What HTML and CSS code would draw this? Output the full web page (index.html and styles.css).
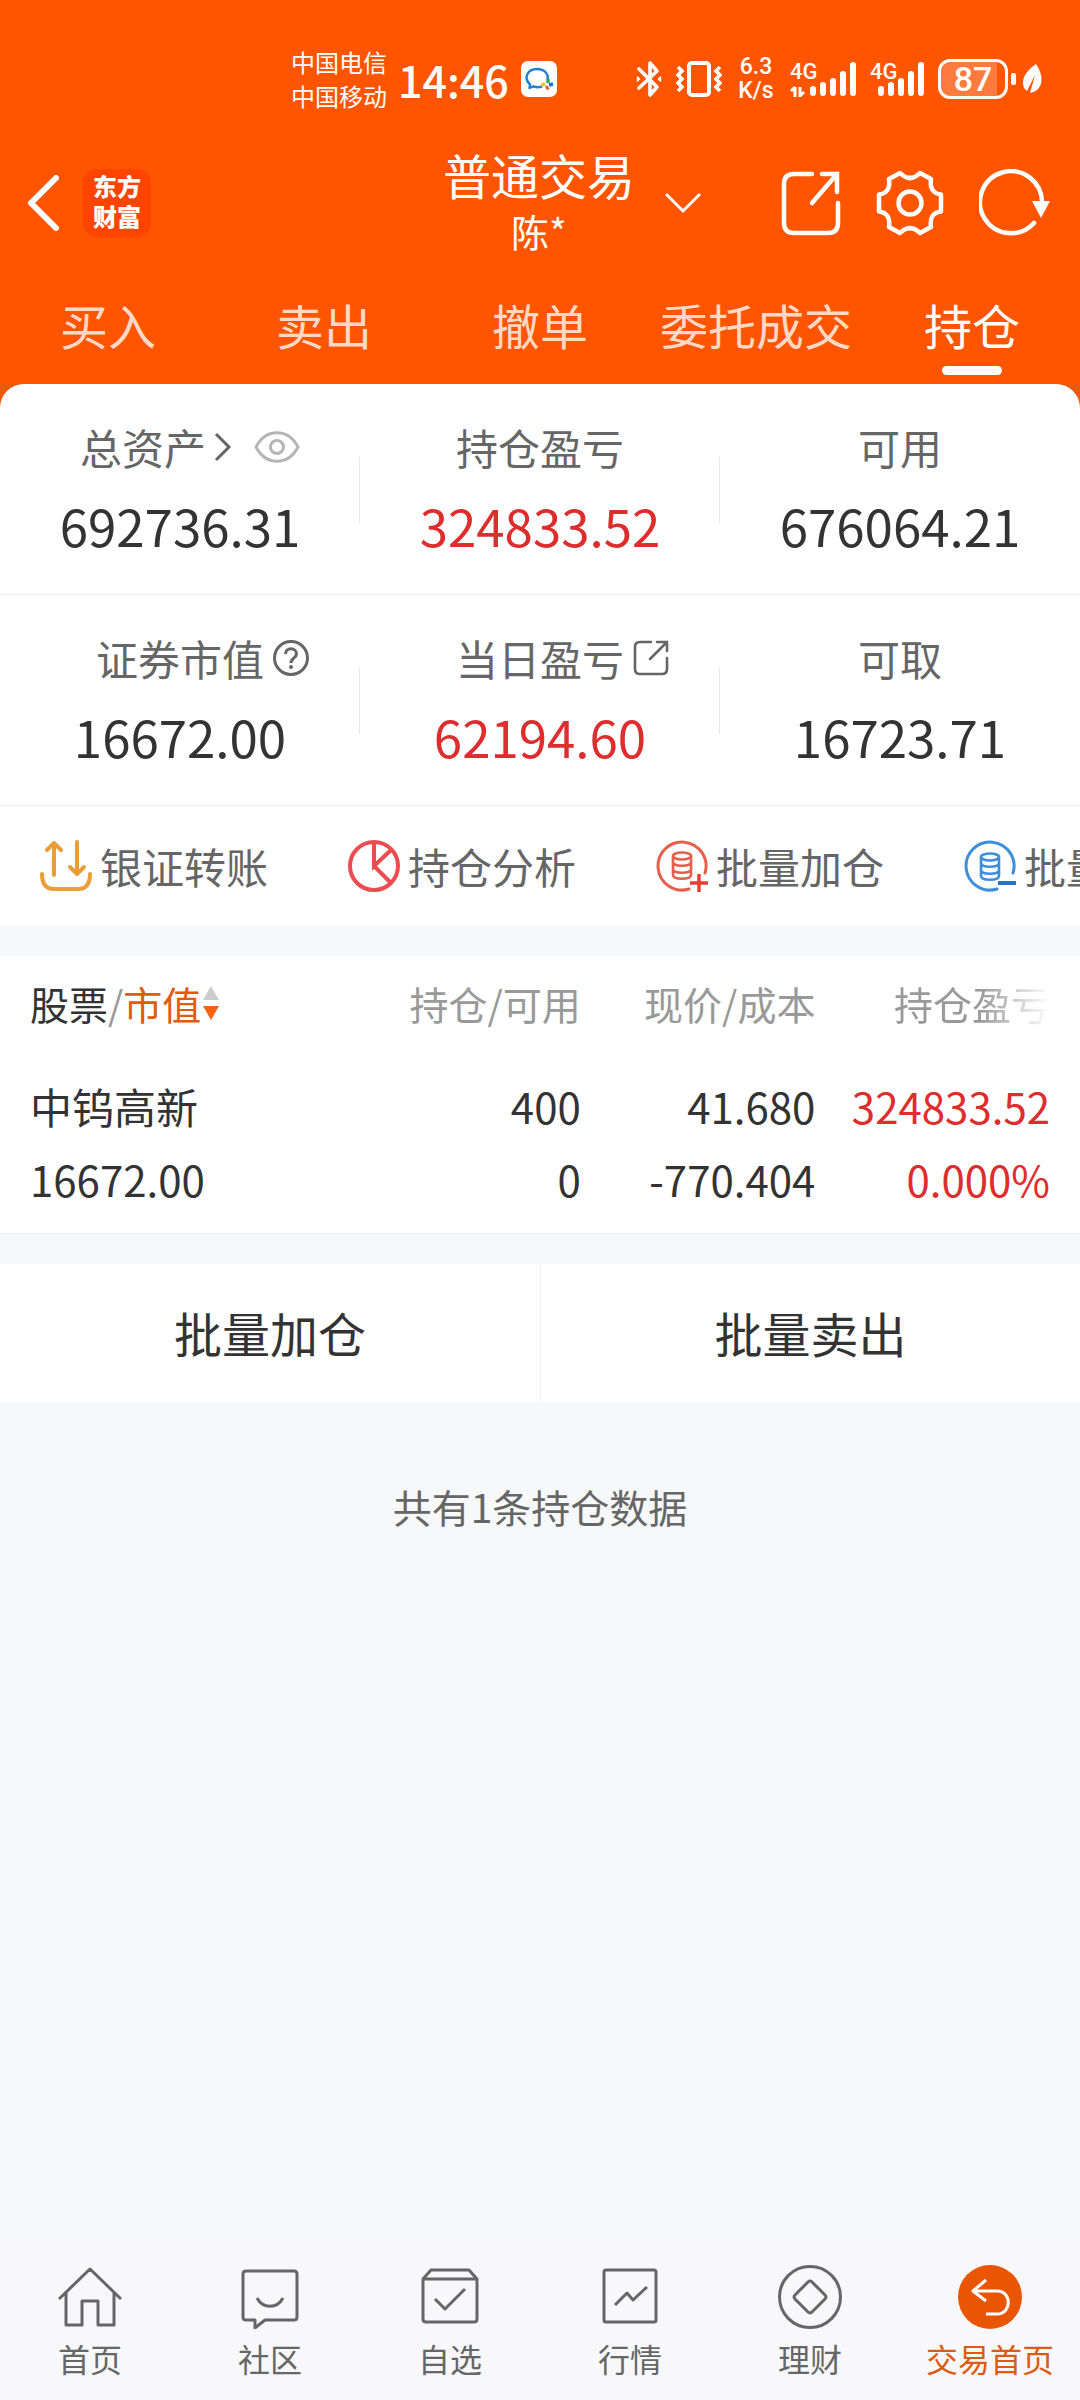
FILE: index.html
```html
<!DOCTYPE html>
<html lang="zh-CN">
<head>
  <meta charset="UTF-8">
  <meta name="viewport" content="width=device-width, initial-scale=1.0">
  <title>普通交易 - 持仓</title>
  <link rel="stylesheet" href="styles.css">
</head>
<body>
  <header class="header">
    <div class="status-bar">
      <div class="carriers">
        <span>中国电信</span>
        <span>中国移动</span>
      </div>
      <span class="time">14:46</span>
      <svg class="app-badge" width="36" height="36" viewBox="0 0 36 36">
        <rect width="36" height="36" rx="7" fill="#fff"/>
        <path d="M21 25.500c-3 1-6 .8-8.500-.2L8.500 27l.6-3.500C2 17 6.500 8 16 8c7.500 0 12 5 10.500 11" fill="none" stroke="#1f7fd6" stroke-width="2.400" stroke-linejoin="round"/>
        <path d="M27 18v4" stroke="#3aa757" stroke-width="3.400"/>
        <path d="M28 24l4-1" stroke="#1f6fd0" stroke-width="3.400"/>
        <path d="M25 25l2.500 3.500" stroke="#e8622c" stroke-width="3"/>
        <path d="M20.500 24.500l3.500-2" stroke="#f5bd1f" stroke-width="3.400"/>
      </svg>
      <div class="status-icons">
        <svg width="26" height="38" viewBox="0 0 26 38" fill="none" stroke="#fff" stroke-width="3.600" stroke-linejoin="round" stroke-linecap="round">
          <path d="M3 9l18 18-7 8V3l7 8L3 28"/>
          <path d="M1.500 17l2 2-2 2zM24.500 17l-2 2 2 2z" stroke-width="1.500" fill="#fff"/>
        </svg>
        <svg width="46" height="38" viewBox="0 0 46 38" fill="none" stroke="#fff" stroke-width="3.600">
          <rect x="13" y="3" width="20" height="32" rx="3" stroke-width="4"/>
          <path d="M2 7l4 4-4 4 4 4-4 4 4 4-4 4M44 7l-4 4 4 4-4 4 4 4-4 4 4 4"/>
        </svg>
        <div class="speed"><span>6.3</span><span>K/s</span></div>
        <svg class="signal" width="66" height="44" viewBox="0 -3 66 44">
          <text x="0" y="19">4G</text>
          <path class="arrows" d="M5 27v10M1 31l4-4M10 27v10M14 32l-4 4"/>
          <path d="M23 29v4M33 25v8M43 21v12M53 14v19M63 5v28"/>
        </svg>
        <svg class="signal" width="54" height="44" viewBox="0 -3 54 44">
          <text x="0" y="19">4G</text>
          <path d="M11 29v4M21 25v8M31 21v12M41 14v19M51 5v28"/>
        </svg>
        <div class="battery"><span>87</span></div>
        <svg class="leaf" width="22" height="32" viewBox="0 0 22 32">
          <path d="M14 1C3 9-1 16 2 25l3 3L13 12 8 30c13-2 15-16 6-29z" fill="#fff"/>
        </svg>
      </div>
    </div>

    <div class="title-bar">
      <div class="title-left">
        <button class="icon-btn" aria-label="返回">
          <svg width="32" height="56" viewBox="0 0 32 56"><path d="M29 3L4 28l25 25" fill="none" stroke="#fff" stroke-width="6" stroke-linecap="round" stroke-linejoin="round"/></svg>
        </button>
        <div class="logo"><span>东方</span><span>财富</span></div>
      </div>
      <div class="title">
        <h1>普通交易</h1>
        <span class="user">陈*</span>
      </div>
      <div class="title-right">
        <button class="icon-btn switch" aria-label="切换账户">
          <svg width="36" height="22" viewBox="0 0 36 22"><path d="M1 2l17 17L35 2" fill="none" stroke="#fff" stroke-width="3"/></svg>
        </button>
        <button class="icon-btn" aria-label="分享">
          <svg width="60" height="68" viewBox="0 0 60 68" fill="none" stroke="#fff" stroke-width="4.500" stroke-linecap="round">
            <path d="M31 5H13Q3 5 3 15v39q0 10 10 10h34q10 0 10-10V34"/>
            <path d="M41 5h15v18M56 5L31 34"/>
          </svg>
        </button>
        <button class="icon-btn" aria-label="设置">
          <svg width="68" height="68" viewBox="0 0 68 68" fill="none" stroke="#fff" stroke-width="4.500" stroke-linejoin="round">
            <path d="M24 4Q34 14 44 4l11 6q-2 14 10 15.500v17Q53 44 55 58l-11 6q-10-10-20 0l-11-6Q15 44 3 42.500v-17Q15 24 13 10z"/>
            <circle cx="34" cy="34" r="11.500"/>
          </svg>
        </button>
        <button class="icon-btn" aria-label="刷新">
          <svg width="72" height="68" viewBox="0 0 72 68">
            <path d="M55 54A31 31 0 1 1 63 34" fill="none" stroke="#fff" stroke-width="4.500" stroke-linecap="round"/>
            <path d="M53 32h18L62 49z" fill="#fff"/>
          </svg>
        </button>
      </div>
    </div>

    <nav class="tabs">
      <a href="#">买入</a>
      <a href="#">卖出</a>
      <a href="#">撤单</a>
      <a href="#">委托成交</a>
      <a href="#" class="active">持仓</a>
    </nav>
  </header>

  <main>
    <div class="card-wrap">
      <section class="card">
        <div class="summary">
          <div class="stat">
            <div class="label label-total">
              <span>总资产</span>
              <svg width="18" height="30" viewBox="0 0 18 30"><path d="M2 2l13 13L2 28" fill="none" stroke="#666" stroke-width="3"/></svg>
              <button class="icon-btn eye" aria-label="隐藏金额">
                <svg width="46" height="32" viewBox="0 0 46 32" fill="none" stroke="#b5b5b5" stroke-width="3">
                  <path d="M2 16C12-3 34-3 44 16 34 35 12 35 2 16z"/>
                  <circle cx="23" cy="16" r="6.500"/>
                </svg>
              </button>
            </div>
            <div class="value">692736.31</div>
          </div>
          <div class="stat">
            <div class="label">持仓盈亏</div>
            <div class="value up">324833.52</div>
          </div>
          <div class="stat">
            <div class="label">可用</div>
            <div class="value">676064.21</div>
          </div>
        </div>
        <div class="summary">
          <div class="stat">
            <div class="label"><span class="with-icon">证券市值
              <svg width="38" height="38" viewBox="0 0 38 38" fill="none" stroke="#666" stroke-width="3">
                <circle cx="19" cy="19" r="16.500"/>
                <path d="M13.500 15c0-7 11-7 11 0 0 4-5.500 4-5.500 9"/>
                <circle cx="19" cy="28" r="2" fill="#666" stroke="none"/>
              </svg></span>
            </div>
            <div class="value">16672.00</div>
          </div>
          <div class="stat">
            <div class="label"><span class="with-icon">当日盈亏
              <svg width="38" height="38" viewBox="0 0 38 38" fill="none" stroke="#666" stroke-width="2.600" stroke-linecap="round">
                <path d="M19 3H8Q3 3 3 8v22q0 5 5 5h22q5 0 5-5V19"/>
                <path d="M25 3h10v9M35 3L18 20"/>
              </svg></span>
            </div>
            <div class="value up">62194.60</div>
          </div>
          <div class="stat">
            <div class="label">可取</div>
            <div class="value">16723.71</div>
          </div>
        </div>
        <div class="shortcuts">
          <a href="#">
            <svg width="52" height="52" viewBox="0 0 52 52" fill="none" stroke="#eb9e38" stroke-width="4" stroke-linecap="round" stroke-linejoin="round">
              <path d="M2 34q0 15 12 15h24q12 0 12-15"/>
              <path d="M14 35V3M7 10l7-7 7 7M37 2v32M30 27l7 7 7-7"/>
            </svg>
            <span>银证转账</span>
          </a>
          <a href="#">
            <svg width="52" height="52" viewBox="0 0 52 52" fill="none" stroke="#eb4c50" stroke-width="4">
              <circle cx="26" cy="26" r="24"/>
              <path d="M26 2v24l17-16M26 26l17 17"/>
            </svg>
            <span>持仓分析</span>
          </a>
          <a href="#">
            <svg width="52" height="52" viewBox="0 0 52 52" fill="none" stroke="#e5604c" stroke-width="3">
              <path d="M33 49A24 24 0 1 1 49 33" stroke-linecap="round"/>
              <g stroke-width="2.600">
                <ellipse cx="26" cy="16" rx="9" ry="3.500"/>
                <path d="M17 16v19c0 5 18 5 18 0V16M17 22c0 5 18 5 18 0M17 29c0 5 18 5 18 0"/>
              </g>
              <path d="M34 43h18M43 34v18" stroke="#ea3d30" stroke-width="3.400"/>
            </svg>
            <span>批量加仓</span>
          </a>
          <a href="#">
            <svg width="52" height="52" viewBox="0 0 52 52" fill="none" stroke="#3c8fd9" stroke-width="3">
              <path d="M33 49A24 24 0 1 1 49 33" stroke-linecap="round"/>
              <g stroke-width="2.600">
                <ellipse cx="26" cy="17" rx="9" ry="3.500"/>
                <path d="M17 17v19c0 5 18 5 18 0V17M17 23c0 5 18 5 18 0M17 30c0 5 18 5 18 0"/>
              </g>
              <path d="M34 43h18" stroke="#2673d2" stroke-width="4"/>
            </svg>
            <span>批量卖出</span>
          </a>
        </div>
      </section>
    </div>

    <section class="holdings">
      <table>
        <colgroup>
          <col class="col-name">
          <col class="col-amount">
          <col class="col-price">
          <col class="col-profit">
        </colgroup>
        <thead>
          <tr>
            <th>
              <button class="sort"><b>股票</b>/<em>市值</em>
                <svg width="16" height="36" viewBox="0 0 16 36"><path d="M0 15L8 1l8 14z" fill="#ccc"/><path d="M0 21h16L8 35z" fill="#f56212"/></svg>
              </button>
            </th>
            <th>持仓/可用</th>
            <th>现价/成本</th>
            <th class="fade">持仓盈亏</th>
          </tr>
        </thead>
        <tbody>
          <tr>
            <td>中钨高新<br>16672.00</td>
            <td>400<br>0</td>
            <td>41.680<br>-770.404</td>
            <td class="up">324833.52<br>0.000%</td>
          </tr>
        </tbody>
      </table>
    </section>

    <div class="actions">
      <button>批量加仓</button>
      <button>批量卖出</button>
    </div>

    <p class="count">共有1条持仓数据</p>
  </main>

  <nav class="bottom-nav">
    <a href="#">
      <svg width="64" height="64" viewBox="0 0 64 64">
        <path d="M1 34L32 4l31 30M8 28v32h16V36h16v24h16V28"/>
      </svg>
      <span>首页</span>
    </a>
    <a href="#">
      <svg width="64" height="64" viewBox="0 0 64 64">
        <path d="M8 6h48q3 0 3 3v43q0 3-3 3H27l-10 8v-8H8q-3 0-3-3V9q0-3 3-3zM19 33c6 11 20 11 26 0"/>
      </svg>
      <span>社区</span>
    </a>
    <a href="#">
      <svg width="64" height="64" viewBox="0 0 64 64">
        <path d="M5 14h54v40q0 3-3 3H8q-3 0-3-3zl8-9h38l8 9M17 34l10 10 20-20"/>
      </svg>
      <span>自选</span>
    </a>
    <a href="#">
      <svg width="64" height="64" viewBox="0 0 64 64">
        <rect x="6" y="5" width="52" height="52" rx="2"/>
        <path d="M17 40l12-12 6 7 14-13"/>
      </svg>
      <span>行情</span>
    </a>
    <a href="#">
      <svg width="64" height="64" viewBox="0 0 64 64">
        <circle cx="32" cy="32" r="30.500"/>
        <path d="M34 17l13 13q2 2 0 4L34 47q-2 2-4 0L17 34q-2-2 0-4l13-13q2-2 4 0z"/>
      </svg>
      <span>理财</span>
    </a>
    <a href="#" class="active">
      <svg width="64" height="64" viewBox="0 0 64 64">
        <circle cx="32" cy="32" r="32" fill="#ea5504" stroke="none"/>
        <path d="M28 15L15 26l13 10M16 26h23c15 0 15 23 0 23H28" stroke="#fff" stroke-width="3"/>
      </svg>
      <span>交易首页</span>
    </a>
  </nav>
</body>
</html>
```
FILE: styles.css
```css
* {
  box-sizing: border-box;
}
body {
  margin: 0;
  min-height: 100vh;
  display: flex;
  flex-direction: column;
  background: #f7f8fa;
  color: #333;
  font-family: "Noto Sans CJK SC", "Noto Sans", sans-serif;
  font-size: 42px;
  overflow-x: hidden;
}
a {
  color: inherit;
  text-decoration: none;
}
button {
  border: none;
  padding: 0;
  background: none;
  color: inherit;
  font: inherit;
  cursor: pointer;
}
svg {
  display: block;
  flex-shrink: 0;
}
.icon-btn {
  display: block;
}
.up {
  color: #dd2d2d;
}

/* header */
.header {
  background: #ff5500;
  color: #fff;
}
.status-bar {
  display: flex;
  align-items: center;
  padding: 45px 36px 0 291px;
}
.carriers {
  display: flex;
  flex-direction: column;
  font-size: 24px;
  line-height: 34px;
}
.time {
  margin-left: 11px;
  font-size: 43px;
  font-weight: 500;
  line-height: 64px;
}
.app-badge {
  margin-left: 12px;
}
.status-icons {
  display: flex;
  align-items: center;
  margin-left: auto;
}
.status-icons > * {
  margin-left: 14px;
}
.speed {
  display: flex;
  flex-direction: column;
  align-items: center;
  width: 40px;
  font-family: Roboto, sans-serif;
  font-size: 23px;
  font-weight: 500;
  line-height: 24px;
}
.signal text {
  fill: #fff;
  font-family: Roboto, sans-serif;
  font-size: 22px;
  font-weight: 500;
}
.signal path {
  fill: none;
  stroke: #fff;
  stroke-width: 6;
  stroke-linecap: round;
}
.signal .arrows {
  stroke-width: 3;
  stroke-linecap: butt;
}
.battery {
  position: relative;
  width: 70px;
  height: 40px;
  border: 3px solid #fff;
  border-radius: 12px;
  background: linear-gradient(90deg, #ff7a3d 87%, #ff5500 87%);
  font-family: Roboto, sans-serif;
  font-size: 34px;
  font-weight: 500;
  line-height: 34px;
  text-align: center;
}
.battery::after {
  content: "";
  position: absolute;
  right: -11px;
  top: 11px;
  width: 5px;
  height: 12px;
  border-radius: 2px;
  background: #fff;
}
.title-bar {
  display: grid;
  grid-template-columns: 1fr auto 1fr;
  align-items: center;
  padding: 34px 29px 0 27px;
}
.title-left,
.title-right {
  display: flex;
  align-items: center;
}
.title-left {
  gap: 24px;
}
.title-right {
  gap: 35px;
}
.switch {
  margin: 0 auto 0 30px;
}
.logo {
  display: flex;
  flex-direction: column;
  justify-content: center;
  width: 68px;
  height: 68px;
  padding-bottom: 4px;
  border-radius: 14px;
  background: #ff4400;
  font-size: 24px;
  font-weight: 900;
  line-height: 30px;
  text-align: center;
}
.title {
  text-align: center;
}
.title h1 {
  margin: 0;
  font-size: 48px;
  font-weight: 400;
  line-height: 54px;
}
.user {
  display: block;
  margin-top: 2px;
  font-size: 38px;
  line-height: 56px;
}
.tabs {
  display: grid;
  grid-template-columns: repeat(5, 1fr);
  padding: 35px 0 9px;
  font-size: 48px;
  line-height: 60px;
  text-align: center;
}
.tabs a {
  color: #ffd9c6;
}
.tabs a::after {
  content: "";
  display: block;
  width: 60px;
  height: 9px;
  margin: 12px auto 0;
  border-radius: 5px;
}
.tabs .active {
  color: #fff;
}
.tabs .active::after {
  background: #fff;
}

/* asset summary */
.card-wrap {
  background: #e95a0c;
}
.card {
  border-radius: 24px 24px 0 0;
  background: #fff;
  overflow: hidden;
}
.summary {
  display: grid;
  grid-template-columns: repeat(3, 1fr);
  padding: 33px 0 34px;
  border-bottom: 1px solid #ececec;
}
.stat {
  position: relative;
  text-align: center;
}
.stat + .stat::before {
  content: "";
  position: absolute;
  left: -1px;
  top: 40px;
  width: 1px;
  height: 66px;
  background: #e8e8e8;
}
.label {
  color: #666;
  line-height: 60px;
}
.label-total {
  display: flex;
  align-items: center;
  justify-content: center;
  padding-left: 20px;
}
.label-total svg {
  margin-left: 8px;
}
.eye {
  margin-left: 14px;
}
.with-icon {
  position: relative;
}
.with-icon svg {
  position: absolute;
  left: 100%;
  top: 12px;
  margin-left: 8px;
}
.value {
  margin-top: 13px;
  font-size: 51px;
  line-height: 70px;
}
.shortcuts {
  display: flex;
  gap: 80px;
  padding: 30px 0 30px 40px;
  color: #666;
  line-height: 60px;
  white-space: nowrap;
}
.shortcuts a {
  display: flex;
  align-items: center;
  gap: 8px;
}

/* holdings table */
.holdings {
  margin-top: 30px;
  padding: 17px 30px 18px;
  border-bottom: 1px solid #ececec;
  background: #fff;
}
.holdings table {
  width: 100%;
  table-layout: fixed;
  border-collapse: collapse;
  text-align: right;
}
.col-name {
  width: 29%;
}
.col-amount {
  width: 25%;
}
.col-price,
.col-profit {
  width: 23%;
}
.holdings th,
.holdings td {
  padding: 0;
  font-weight: 400;
  white-space: nowrap;
}
.holdings th {
  color: #999;
  font-size: 39px;
  line-height: 60px;
}
.holdings td {
  padding-top: 36px;
  line-height: 73px;
}
.holdings th:first-child,
.holdings td:first-child {
  text-align: left;
}
.sort {
  display: flex;
  align-items: center;
}
.sort b {
  color: #333;
  font-weight: 400;
}
.sort em {
  color: #e05a10;
  font-style: normal;
}
.sort svg {
  margin-left: 2px;
}
.fade {
  -webkit-mask-image: linear-gradient(90deg, #000 70%, transparent);
  mask-image: linear-gradient(90deg, #000 70%, transparent);
}

/* batch actions */
.actions {
  display: grid;
  grid-template-columns: 1fr 1fr;
  margin-top: 30px;
  background: #fff;
}
.actions button {
  padding: 32px 0 34px;
  font-size: 48px;
  line-height: 72px;
}
.actions button + button {
  border-left: 1px solid #f3f3f5;
}
.count {
  margin: 74px 0 0;
  color: #666;
  font-size: 39px;
  line-height: 60px;
  text-align: center;
}

/* bottom nav */
.bottom-nav {
  display: grid;
  grid-template-columns: repeat(6, 1fr);
  margin-top: auto;
  padding: 25px 0 22px;
  background: #f8f8fa;
  color: #666;
  font-size: 32px;
  line-height: 40px;
}
.bottom-nav a {
  display: flex;
  flex-direction: column;
  align-items: center;
  gap: 9px;
}
.bottom-nav svg {
  fill: none;
  stroke: #666;
  stroke-width: 3;
  stroke-linejoin: round;
}
.bottom-nav .active {
  color: #dd5a12;
}
```
